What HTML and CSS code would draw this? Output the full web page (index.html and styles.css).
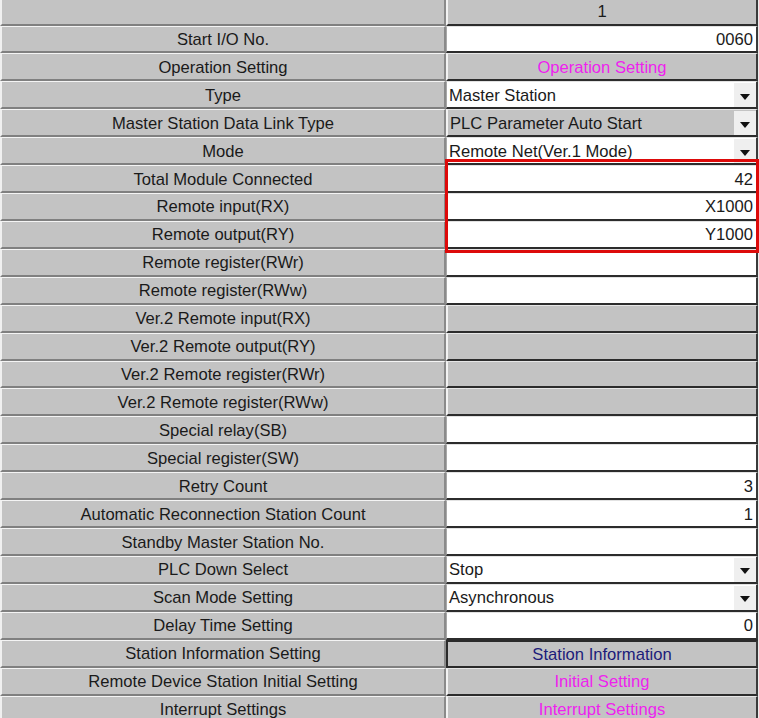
FILE: index.html
```html
<!DOCTYPE html>
<html>
<head>
<meta charset="utf-8">
<link rel="stylesheet" href="styles.css">
</head>
<body>
<div class="sheet">
  <div class="lbl head-l"></div><div class="val gray center head-v">1</div>

  <div class="lbl">Start I/O No.</div><div class="val white num">0060</div>
  <div class="lbl">Operation Setting</div><div class="val gray center btn magenta">Operation Setting</div>
  <div class="lbl">Type</div><div class="val white sel"><span class="txt">Master Station</span><span class="drop"><i class="tri"></i></span></div>
  <div class="lbl">Master Station Data Link Type</div><div class="val gray sel"><span class="txt">PLC Parameter Auto Start</span><span class="drop"><i class="tri"></i></span></div>
  <div class="lbl">Mode</div><div class="val white sel"><span class="txt">Remote Net(Ver.1 Mode)</span><span class="drop"><i class="tri"></i></span></div>
  <div class="lbl">Total Module Connected</div><div class="val white num">42</div>
  <div class="lbl">Remote input(RX)</div><div class="val white num">X1000</div>
  <div class="lbl">Remote output(RY)</div><div class="val white num">Y1000</div>
  <div class="lbl">Remote register(RWr)</div><div class="val white"></div>
  <div class="lbl">Remote register(RWw)</div><div class="val white"></div>
  <div class="lbl">Ver.2 Remote input(RX)</div><div class="val gray"></div>
  <div class="lbl">Ver.2 Remote output(RY)</div><div class="val gray"></div>
  <div class="lbl">Ver.2 Remote register(RWr)</div><div class="val gray"></div>
  <div class="lbl">Ver.2 Remote register(RWw)</div><div class="val gray"></div>
  <div class="lbl">Special relay(SB)</div><div class="val white"></div>
  <div class="lbl">Special register(SW)</div><div class="val white"></div>
  <div class="lbl">Retry Count</div><div class="val white num">3</div>
  <div class="lbl">Automatic Reconnection Station Count</div><div class="val white num">1</div>
  <div class="lbl">Standby Master Station No.</div><div class="val white"></div>
  <div class="lbl">PLC Down Select</div><div class="val white sel"><span class="txt">Stop</span><span class="drop"><i class="tri"></i></span></div>
  <div class="lbl">Scan Mode Setting</div><div class="val white sel"><span class="txt">Asynchronous</span><span class="drop"><i class="tri"></i></span></div>
  <div class="lbl">Delay Time Setting</div><div class="val white num">0</div>
  <div class="lbl">Station Information Setting</div><div class="val gray center btn navy pressed">Station Information</div>
  <div class="lbl">Remote Device Station Initial Setting</div><div class="val gray center btn magenta">Initial Setting</div>
  <div class="lbl">Interrupt Settings</div><div class="val gray center btn magenta">Interrupt Settings</div>

  <div class="mark"></div>
</div>
</body>
</html>
```

FILE: styles.css
```css
html, body {
  margin: 0;
  padding: 0;
  background: #ececec;
  overflow: hidden;
}

.sheet {
  position: relative;
  width: 759px;
  height: 718px;
  display: grid;
  grid-template-columns: 446px 312px;
  grid-template-rows: 25.5px;
  grid-auto-rows: 27.93px;
  font-family: "Liberation Sans", Arial, sans-serif;
  font-size: 16.6px;
  color: #1a1a1a;
  overflow: hidden;
}

.lbl {
  box-sizing: border-box;
  background: #c3c3c3;
  border-top: 1px solid #f4f4f4;
  border-left: 2px solid #f0f0f0;
  border-bottom: 2px solid #808080;
  border-right: 2px solid #8a8a8a;
  display: flex;
  align-items: center;
  justify-content: center;
  white-space: nowrap;
  padding-top: 2px;
}

.head-l {
  border-top: none;
}

.val {
  box-sizing: border-box;
  display: flex;
  align-items: center;
  white-space: nowrap;
  border-bottom: 2px solid #2c2c2c;
  border-right: 2px solid #3a3a3a;
  padding-top: 2px;
}

.white {
  background: #ffffff;
  border-top: 1px solid #e2e2e2;
  border-left: 1px solid #a8a8a8;
}

.gray {
  background: #c3c3c3;
  border-top: 1px solid #e6e6e6;
  border-left: 2px solid #f2f2f2;
}

.head-v {
  border-top: none;
  padding-top: 0;
}

.center {
  justify-content: center;
}

.num {
  justify-content: flex-end;
  padding-right: 3px;
}

.sel {
  justify-content: space-between;
  padding-left: 2px;
  padding-top: 0;
}

.sel .txt {
  padding-top: 2px;
}

.drop {
  align-self: stretch;
  width: 22px;
  background: #efefef;
  display: flex;
  align-items: center;
  justify-content: center;
  margin-top: 1px;
}

.tri {
  width: 0;
  height: 0;
  border-left: 5px solid transparent;
  border-right: 5px solid transparent;
  border-top: 6px solid #111;
  margin-top: 3px;
}

.magenta {
  color: #ee22ee;
}

.navy {
  color: #1c1c7a;
}

.pressed {
  border-top: 2px solid #2a2a2a;
  border-left: 2px solid #2a2a2a;
  border-bottom: 2px solid #2a2a2a;
}

.mark {
  position: absolute;
  left: 445px;
  top: 159px;
  width: 314px;
  height: 94px;
  box-sizing: border-box;
  border: 3px solid #dd0a0a;
  pointer-events: none;
}
```
